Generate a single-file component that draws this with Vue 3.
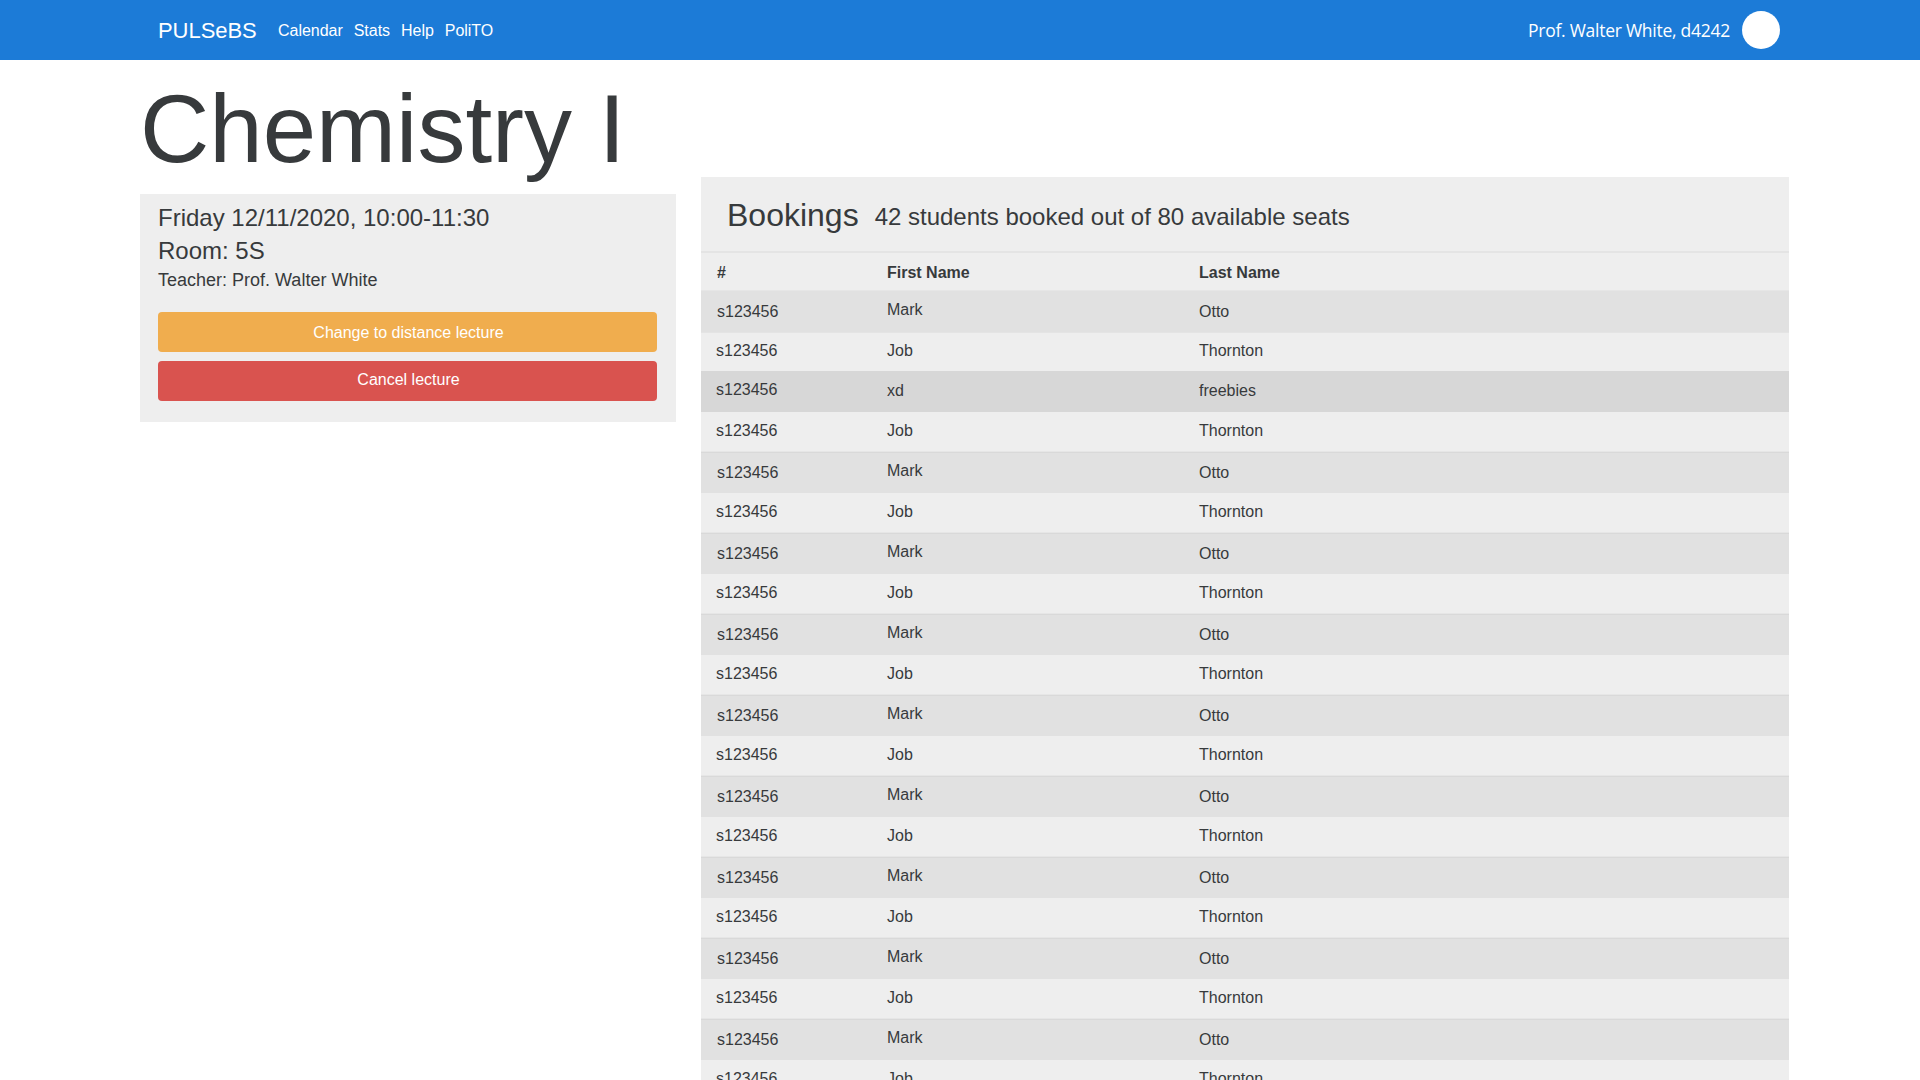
<script setup>
const links = ['Calendar', 'Stats', 'Help', 'PoliTO']

const mark = { first: 'Mark', last: 'Otto', kind: 'striped' }
const job = { first: 'Job', last: 'Thornton', kind: 'plain' }

const students = [
  { ...mark, kind: 'striped lead' },
  { ...job, kind: 'edged' },
  { first: 'xd', last: 'freebies', kind: 'active' },
  job,
  ...Array.from({ length: 8 }, () => [mark, job]).flat(),
].map((student, index) => ({ ...student, key: index, id: 's123456' }))
</script>

<template>
  <div class="page">
    <header class="navbar">
      <a class="brand">PULSeBS</a>
      <nav class="links">
        <a v-for="link in links" :key="link">{{ link }}</a>
      </nav>
      <div class="user">
        <span class="user-name">Prof. Walter White, d4242</span>
        <span class="avatar"></span>
      </div>
    </header>

    <main class="content">
      <section class="lecture">
        <h1>Chemistry I</h1>
        <div class="card">
          <p class="when">Friday 12/11/2020, 10:00-11:30</p>
          <p class="room">Room: 5S</p>
          <p class="teacher">Teacher: Prof. Walter White</p>
          <button class="btn warning">Change to distance lecture</button>
          <button class="btn danger">Cancel lecture</button>
        </div>
      </section>

      <section class="bookings">
        <div class="bookings-head">
          <h2>Bookings</h2>
          <p>42 students booked out of 80 available seats</p>
        </div>
        <div class="row head">
          <span class="id">#</span>
          <span class="first">First Name</span>
          <span class="last">Last Name</span>
        </div>
        <div v-for="s in students" :key="s.key" class="row" :class="s.kind">
          <span class="id">{{ s.id }}</span>
          <span class="first">{{ s.first }}</span>
          <span class="last">{{ s.last }}</span>
        </div>
      </section>
    </main>
  </div>
</template>

<style>
body {
  margin: 0;
  overflow: hidden;
}
</style>

<style scoped>
* {
  box-sizing: border-box;
}
.page {
  height: 1080px;
  overflow: hidden;
  background: #fff;
  color: #373a3c;
  font: 16px/24px "Liberation Sans", Arial, sans-serif;
}
h1, h2, p {
  margin: 0;
  font-weight: 400;
  white-space: nowrap;
}
.navbar {
  display: flex;
  align-items: center;
  height: 60px;
  padding: 0 140px 0 158px;
  background: #1c7bd7;
  color: #fff;
}
.brand {
  width: 120px;
  padding-top: 2px;
  font-size: 22px;
  letter-spacing: -0.05px;
}
.links {
  display: flex;
  gap: 11px;
  padding-top: 2px;
  letter-spacing: -0.03px;
}
.user {
  display: flex;
  align-items: center;
  gap: 12px;
  margin-left: auto;
}
.user-name {
  font: 17.5px/24px "Open Sans", "Noto Sans", sans-serif;
  letter-spacing: -0.26px;
}
.avatar {
  width: 38px;
  height: 38px;
  border-radius: 50%;
  background: #fff;
}
.content {
  display: flex;
  align-items: flex-start;
  gap: 25px;
  padding-left: 140px;
}
.lecture {
  width: 536px;
}
h1 {
  height: 134px;
  padding-top: 21px;
  font-size: 96px;
  line-height: 96px;
}
.card {
  height: 228px;
  padding: 7px 19px 0 18px;
  background: #eee;
}
.when, .room {
  font-size: 24px;
  line-height: 33px;
}
.teacher {
  margin-bottom: 18px;
  font-size: 18px;
  line-height: 27px;
}
.btn {
  display: block;
  width: 100%;
  height: 40px;
  margin: 0 0 9px;
  padding: 2px 0 0 2px;
  border: 0;
  border-radius: 4px;
  color: #fff;
  font: inherit;
}
.warning {
  background: #f0ad4e;
}
.danger {
  padding: 0 0 2px 2px;
  background: #d9534f;
}
.bookings {
  width: 1088px;
  margin-top: 117px;
  background: #eee;
}
.bookings-head {
  display: flex;
  align-items: baseline;
  gap: 16px;
  height: 74px;
  padding: 18px 0 0 26px;
}
h2 {
  font-size: 32px;
  line-height: 40px;
}
.bookings-head p {
  padding-bottom: 1px;
  font-size: 24px;
  transform: translateY(-1px);
}
.row {
  display: flex;
  height: 39px;
  padding: 7px 0 0 15px;
}
.id {
  width: 171px;
}
.first {
  width: 312px;
}
.head {
  padding-top: 8px;
  border-top: 2px solid #e4e4e4;
  font-weight: 700;
}
.head .id {
  padding-left: 1px;
}
.striped {
  height: 42px;
  padding-top: 9px;
  border-top: 1px solid #e6e6e6;
  background: #e1e1e1;
  box-shadow: inset 0 1px #d9d9d9;
}
.striped .id {
  padding-left: 1px;
}
.striped .first {
  margin-top: -2px;
}
.lead {
  height: 43px;
  border-bottom: 1px solid #e4e4e4;
  box-shadow: none;
}
.edged {
  height: 38px;
  padding-top: 6px;
}
.active {
  height: 41px;
  padding-top: 8px;
  background: #d7d7d7;
}
.active .id {
  margin-top: -1px;
}
</style>
